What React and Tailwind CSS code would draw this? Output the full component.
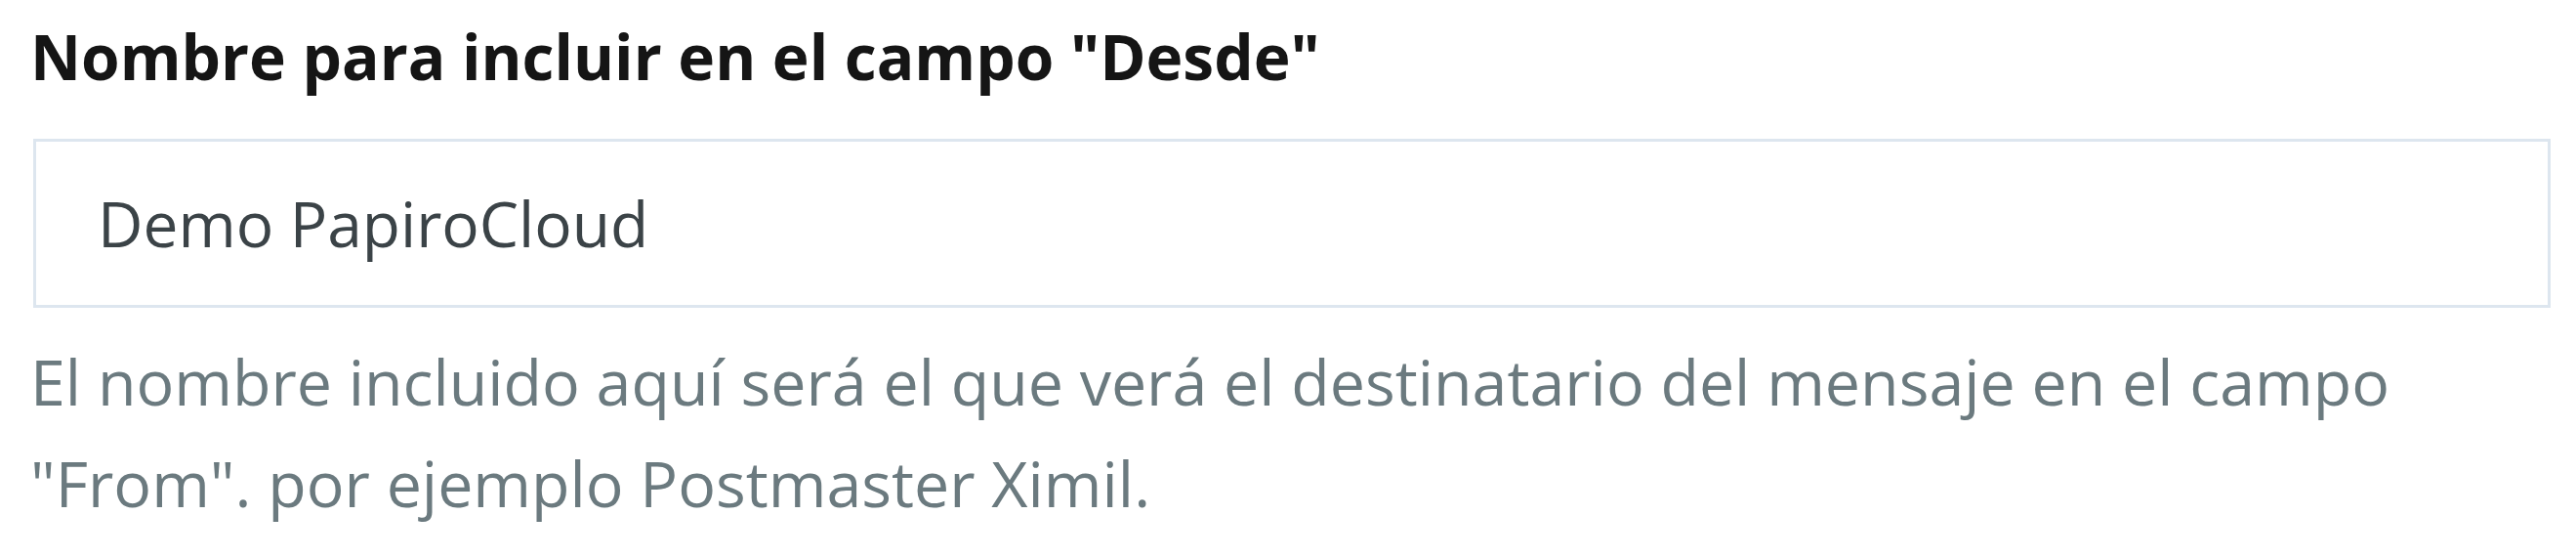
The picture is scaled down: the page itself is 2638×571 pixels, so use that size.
// Campo "Desde" — etiqueta, input de solo lectura y texto de ayuda
export default function App() {
  return (
    <div className="min-h-[571px] bg-white pl-[31px] pr-[26px] pt-[10px] font-['Open_Sans',sans-serif]">
      <label className="block text-[64px] font-bold leading-[96px] text-[#151515]">
        Nombre para incluir en el campo "Desde"
      </label>

      <div className="ml-[3px] mt-[36px] flex h-[173px] items-center border-[3px] border-[#dde6ef] bg-white pl-[63px]">
        <span className="text-[64px] leading-normal text-[#3b4347]">Demo PapiroCloud</span>
      </div>

      <p className="mt-[23px] text-[64.5px] leading-[104px] text-[#6b7a7f]">
        El nombre incluido aquí será el que verá el destinatario del mensaje en el campo "From". por ejemplo
        Postmaster Ximil.
      </p>
    </div>
  )
}
